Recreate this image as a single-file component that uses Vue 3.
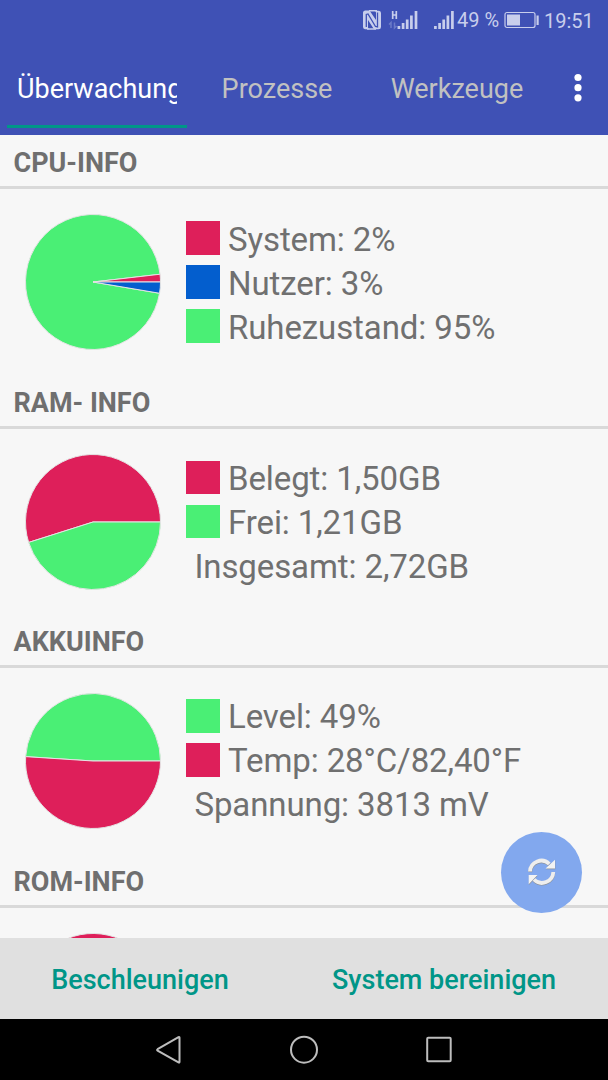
<template>
  <div class="screen">
    <header class="header">
      <div class="status-bar">
        <svg class="status-icons" width="102" height="24" viewBox="0 0 102 24">
          <path fill="#c8ceec" d="M4 2.500H8.500L15 12V4.500L14 2.800H18Q20 3 20 5V19Q20 21.500 17 21.200H13L7 12V19.500L8 21.200H4Q2 21 2 19V4.500Q2 3 4 2.500z" />
          <path fill="none" stroke="#c8ceec" stroke-width="1.500" d="M8 2.800h8M6 21h9" />
          <path
            fill="none"
            stroke="#3f51b5"
            stroke-width="1.300"
            d="M5.300 19V6.500L7 6l7.500 12.500 2 .5V4.500"
          />
          <path
            fill="none"
            stroke="#c8ceec"
            stroke-width="1.700"
            d="M31.700 3v8M35.300 3v8M31.500 7h4"
          />
          <path fill="none" stroke="#6c7bc8" stroke-width="1.500" d="M30 20v-5.500l-2 2M33.500 14.500V20l2-2" />
          <path
            fill="none"
            stroke="#c8ceec"
            stroke-width="2.700"
            d="M37.900 18v3M42.100 15v6M46.200 11.500v9.500M50.400 7.500v13.500M55 3v18M74.400 18v3M78.600 15v6M82.700 11.500v9.500M86.900 7.500v13.500M91.400 3v18"
          />
        </svg>
        <span class="status-percent">49 %</span>
        <svg class="status-battery" width="36" height="18" viewBox="0 0 36 18">
          <rect x="1" y="1.500" width="30" height="15" rx="2" fill="none" stroke="#c8ceec" stroke-width="1.200" />
          <rect x="3" y="3.500" width="13" height="11" fill="#c8ceec" />
          <rect x="32.500" y="4.500" width="2.200" height="9.500" fill="#c8ceec" />
        </svg>
        <span class="status-time">19:51</span>
      </div>
      <nav class="tabs">
        <button
          v-for="tab in tabs"
          :key="tab.id"
          class="tab"
          :class="{ active: activeTab === tab.id }"
          @click="activeTab = tab.id"
        >
          <span class="tab-label">{{ tab.label }}</span>
        </button>
        <button class="overflow">
          <svg width="8" height="30" viewBox="0 0 8 30" fill="#fff">
            <circle cx="4" cy="4.500" r="3.600" />
            <circle cx="4" cy="14.700" r="3.600" />
            <circle cx="4" cy="24.800" r="3.600" />
          </svg>
        </button>
      </nav>
    </header>

    <main class="content">
      <section v-for="section in sections" :key="section.id" class="section" :class="section.id">
        <h2 class="section-title">{{ section.title }}</h2>
        <div class="section-body">
          <svg class="pie" width="138" height="138" viewBox="-69 -69 138 138">
            <path
              v-for="(slice, i) in section.slices"
              :key="i"
              :d="slicePath(slice.from, slice.to)"
              :fill="slice.color"
              stroke="#e4e4e4"
              stroke-width="1"
            />
          </svg>
          <ul class="legend">
            <li v-for="row in section.rows" :key="row.text" class="legend-row">
              <span v-if="row.color" class="swatch" :style="{ background: row.color }"></span>
              <span class="legend-text">{{ row.text }}</span>
            </li>
          </ul>
        </div>
      </section>
      <button class="fab">
        <svg width="30" height="30" viewBox="0 0 30 30">
          <path
            fill="none"
            stroke="#8c9198"
            stroke-width="3.800"
            d="M3.200 15.200A11.300 11.300 0 0 1 22.500 7.700M26.300 15.700A11.300 11.300 0 0 1 7 23.200"
          />
          <path fill="#8c9198" d="M28.300 3.500v8.700h-9.500zM1.900 28v-9.200h8.800z" />
          <path
            fill="none"
            stroke="#eeeeee"
            stroke-width="3.800"
            d="M3 14.500A11.300 11.300 0 0 1 22.300 7M26.300 15A11.300 11.300 0 0 1 7 22.500"
          />
          <path fill="#f3f3f3" d="M28 2.700v8.700h-9.500zM1.700 27.300v-9.200h8.800z" />
        </svg>
      </button>
    </main>

    <footer class="actions">
      <button class="action">Beschleunigen</button>
      <button class="action">System bereinigen</button>
    </footer>

    <div class="nav-bar">
      <svg width="30" height="30" viewBox="0 0 30 30">
        <path d="M25.500 2.800v24q0 1.200-1 .6L3.600 15.600q-1-.7 0-1.400L24.500 2.200q1-.6 1 .6z" />
      </svg>
      <svg width="30" height="30" viewBox="0 0 30 30">
        <circle cx="15" cy="14.700" r="13" />
      </svg>
      <svg width="30" height="30" viewBox="0 0 30 30">
        <rect x="3.200" y="2.800" width="23.500" height="23.500" rx="1" />
      </svg>
    </div>
  </div>
</template>

<script setup>
import { ref } from 'vue';

const RED = '#de1f5a';
const GREEN = '#4aef75';
const BLUE = '#035ece';
const RADIUS = 67.5;

const activeTab = ref('monitor');

const tabs = [
  { id: 'monitor', label: 'Überwachung' },
  { id: 'processes', label: 'Prozesse' },
  { id: 'tools', label: 'Werkzeuge' },
];

// slice angles are in degrees, clockwise from three o'clock
const sections = [
  {
    id: 'cpu',
    title: 'CPU-INFO',
    slices: [
      { from: 9.6, to: 353.4, color: GREEN },
      { from: 353.4, to: 360, color: RED },
      { from: 0, to: 9.6, color: BLUE },
    ],
    rows: [
      { text: 'System: 2%', color: RED },
      { text: 'Nutzer: 3%', color: BLUE },
      { text: 'Ruhezustand: 95%', color: GREEN },
    ],
  },
  {
    id: 'ram',
    title: 'RAM- INFO',
    slices: [
      { from: 162.4, to: 360, color: RED },
      { from: 0, to: 162.4, color: GREEN },
    ],
    rows: [
      { text: 'Belegt: 1,50GB', color: RED },
      { text: 'Frei: 1,21GB', color: GREEN },
      { text: 'Insgesamt: 2,72GB' },
    ],
  },
  {
    id: 'battery',
    title: 'AKKUINFO',
    slices: [
      { from: 183.7, to: 360, color: GREEN },
      { from: 0, to: 183.7, color: RED },
    ],
    rows: [
      { text: 'Level: 49%', color: GREEN },
      { text: 'Temp: 28°C/82,40°F', color: RED },
      { text: 'Spannung: 3813 mV' },
    ],
  },
  {
    id: 'rom',
    title: 'ROM-INFO',
    slices: [
      { from: 170, to: 360, color: RED },
      { from: 0, to: 170, color: GREEN },
    ],
    rows: [],
  },
];

function point(deg) {
  const rad = (deg * Math.PI) / 180;
  return `${(RADIUS * Math.cos(rad)).toFixed(2)} ${(RADIUS * Math.sin(rad)).toFixed(2)}`;
}

function slicePath(from, to) {
  const large = to - from > 180 ? 1 : 0;
  return `M0 0L${point(from)}A${RADIUS} ${RADIUS} 0 ${large} 1 ${point(to)}Z`;
}
</script>

<style>
body {
  margin: 0;
}
</style>

<style scoped>
.screen {
  display: flex;
  flex-direction: column;
  width: 608px;
  height: 1080px;
  overflow: hidden;
  background: #f7f7f7;
  font-family: Roboto, 'Liberation Sans', sans-serif;
}
button {
  padding: 0;
  border: 0;
  background: none;
  font-family: inherit;
}
.header {
  height: 135px;
  flex: none;
  background: #3f51b5;
}
.status-bar {
  display: flex;
  align-items: center;
  height: 40px;
  padding-left: 361px;
  color: #c8ceec;
  font-size: 20px;
  white-space: nowrap;
}
.status-icons {
  flex: none;
  margin-right: -6px;
}
.status-percent {
  width: 47px;
}
.status-battery {
  flex: none;
}
.status-time {
  margin: 2px 0 0 4px;
}
.tabs {
  display: flex;
  height: 88px;
  padding-left: 7px;
}
.tab {
  display: flex;
  align-items: center;
  justify-content: center;
  box-sizing: border-box;
  width: 180px;
  padding: 12px 10px 0;
  border-bottom: 3px solid transparent;
  color: #c1c1c1;
  font-size: 27px;
}
.tab.active {
  border-color: #009688;
  color: #fff;
}
.tab-label {
  overflow: hidden;
  line-height: 36px;
  white-space: nowrap;
}
.overflow {
  display: flex;
  align-items: center;
  margin-left: 26.5px;
  padding-top: 7px;
}
.content {
  position: relative;
  flex: 1;
  min-height: 0;
  overflow: hidden;
}
.section {
  height: 239.67px;
}
.section-title {
  box-sizing: border-box;
  height: 54px;
  margin: 0;
  padding: 0 13.5px;
  border-bottom: 3px solid #d9d9d9;
  color: #6f6f6f;
  font-size: 27px;
  font-weight: 700;
  line-height: 56px;
}
.section-body {
  display: flex;
  align-items: flex-start;
  padding: 24px 0 0 24px;
}
.pie {
  flex: none;
}
.legend {
  margin: 3px 0 0;
  padding: 0 0 0 24px;
  list-style: none;
}
.battery .legend {
  margin-top: 1.4px;
}
.legend-row {
  display: flex;
  align-items: center;
  height: 44px;
  color: #707070;
  font-size: 33px;
  letter-spacing: -0.1px;
  white-space: nowrap;
}
.swatch {
  width: 33.6px;
  height: 33.6px;
}
.legend-text {
  margin-left: 8.4px;
  padding-top: 2px;
}
.fab {
  position: absolute;
  right: 26px;
  bottom: 25.5px;
  display: flex;
  align-items: center;
  justify-content: center;
  width: 81px;
  height: 81px;
  border-radius: 50%;
  background: #82a8ee;
}
.actions {
  display: grid;
  grid-template-columns: 280px 328px;
  flex: none;
  height: 81px;
  background: #e0e0e0;
}
.action {
  padding-top: 2px;
  color: #009688;
  font-size: 27px;
  font-weight: 500;
}
.nav-bar {
  display: flex;
  align-items: center;
  justify-content: center;
  gap: 105px;
  flex: none;
  height: 61px;
  background: #000;
}
.nav-bar svg {
  fill: none;
  stroke: #bdbdbd;
  stroke-width: 2;
}
</style>
